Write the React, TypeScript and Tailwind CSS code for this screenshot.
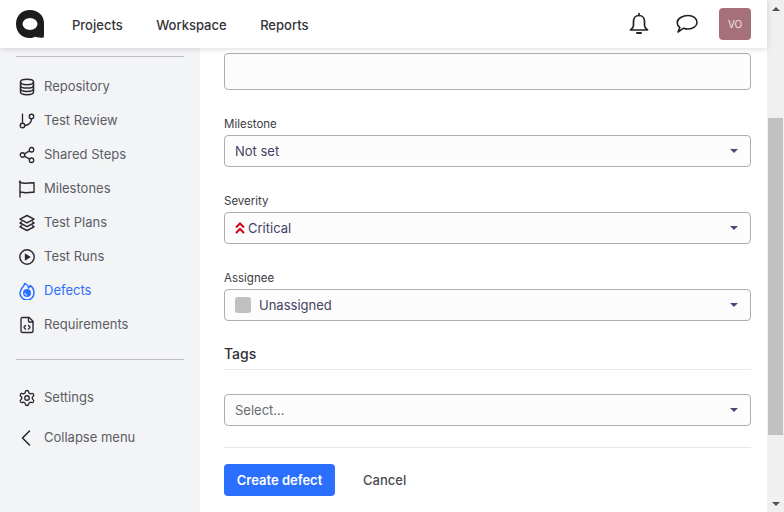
import { FileCode, GitBranch, Settings, Share2 } from 'lucide-react';
import type { ReactNode } from 'react';

const FONT = "font-['Inter','Liberation_Sans',sans-serif]";

function Logo() {
  return (
    <svg width="28" height="28" viewBox="0 0 28 28">
      <path d="M14 0C5.500 0 0 6 0 14s5.500 14 14 14c2 0 3.500-.4 5-1.200 2.500.9 5.500 1 8.500 1 .3-1 .5-2 .5-3.800V13C28 5.500 22 0 14 0z" fill="#1d1d1f" />
      <ellipse cx="14" cy="14" rx="7.500" ry="6" fill="#fff" />
    </svg>
  );
}

function DatabaseIcon() {
  return (
    <svg width="18" height="18" viewBox="0 0 18 18" fill="none" stroke="currentColor" strokeWidth="1.500">
      <ellipse cx="9" cy="4" rx="6.500" ry="2.700" />
      <path d="M2.500 4v10c0 1.600 3 2.700 6.500 2.700s6.500-1.100 6.500-2.700V4" />
      <path d="M2.500 7.400c0 1.600 3 2.700 6.500 2.700s6.500-1.100 6.500-2.700" />
      <path d="M2.500 10.700c0 1.600 3 2.700 6.500 2.700s6.500-1.100 6.500-2.700" />
    </svg>
  );
}

function MilestoneIcon() {
  return (
    <svg width="18" height="18" viewBox="0 0 18 18" fill="none" stroke="currentColor" strokeWidth="1.400" strokeLinecap="round" strokeLinejoin="round">
      <path d="M2 1v16" />
      <path d="M1.500 2c2 1 3 1.300 5 1.300 3 0 5-.6 9.500-.6v9.600c-3-.3-6 .4-8.500.4-2 0-3.500-.4-5.500-.7" />
    </svg>
  );
}

function PlansIcon() {
  return (
    <svg width="18" height="18" viewBox="0 0 18 18" fill="none" stroke="currentColor" strokeWidth="1.500" strokeLinejoin="round">
      <path d="M9 1.500l7 3.700-7 3.700-7-3.700z" />
      <path d="M4 7.500L2 9l7 3.700L16 9l-2-1.500" />
      <path d="M4 11.300L2 12.800l7 3.700 7-3.700-2-1.500" />
    </svg>
  );
}

function RunsIcon() {
  return (
    <svg width="18" height="18" viewBox="0 0 18 18" fill="none">
      <circle cx="9" cy="9" r="7.200" stroke="currentColor" strokeWidth="1.400" />
      <path d="M6.800 5.300l6 3.700-6 3.700z" fill="currentColor" />
    </svg>
  );
}

function DefectIcon() {
  return (
    <svg width="18" height="18" viewBox="0 0 18 18" fill="none">
      <path d="M6.500 1.500c.2 2-1.200 2.500-2.500 4.500C3 7.500 2 9 2 11a7 7 0 0 0 14 0c0-3-1.500-6-4-7.500-.2 1.200-.7 2-1.500 2.500C10.500 4 8.500 2 6.500 1.500z" stroke="#2b6fff" strokeWidth="1.500" strokeLinejoin="round" />
      <circle cx="9" cy="11" r="4" fill="#2b6fff" />
      <path d="M6.800 11a2.200 2.200 0 0 0 2.200 2.200" stroke="#fff" strokeWidth="1" />
    </svg>
  );
}

function BellIcon() {
  return (
    <svg width="22" height="24" viewBox="0 0 22 24" fill="none" stroke="#222" strokeWidth="1.700" strokeLinecap="round" strokeLinejoin="round">
      <path d="M11 1.500v2" />
      <path d="M11 3.500c-3.500 0-5.500 2.700-5.500 6v4c0 1.800-1.300 3.200-3 4.500h17c-1.700-1.300-3-2.700-3-4.500v-4c0-3.300-2-6-5.500-6z" />
      <path d="M9 21h4" strokeWidth="2" />
    </svg>
  );
}

function ChatIcon() {
  return (
    <svg width="22" height="20" viewBox="0 0 22 20" fill="none" stroke="#222" strokeWidth="1.600" strokeLinejoin="round">
      <path d="M12 1.500c5 0 9 2.800 9 6.700s-4 6.800-9 6.800c-1.700 0-3.100-.3-4.400-.8L2 18l1.800-4.500C2 12.200 1.200 10.300 1.200 8.500 1.200 4.500 7 1.500 12 1.500z" />
    </svg>
  );
}

function CollapseIcon() {
  return (
    <svg width="18" height="18" viewBox="0 0 18 18" fill="none" stroke="#2a2a2e" strokeWidth="1.600" strokeLinecap="round" strokeLinejoin="round">
      <path d="M11.500 2L4.500 9l7 7" />
    </svg>
  );
}

function SeverityIcon() {
  return (
    <svg width="10" height="12" viewBox="0 0 10 12" fill="none" stroke="#d0021b" strokeWidth="2">
      <path d="M1 5.500l4-4 4 4" />
      <path d="M1 11l4-4 4 4" />
    </svg>
  );
}

function NavItem({ icon, label, active, className }: { icon: ReactNode; label: string; active?: boolean; className?: string }) {
  return (
    <div className={`flex items-center h-[34px] pl-[18px] ${active ? 'text-[#2b6fff]' : 'text-[#5c5c66]'} ${className ?? ''}`}>
      <span className={`w-[26px] flex-shrink-0 ${active ? 'text-[#2b6fff]' : 'text-[#2a2a2e]'}`}>{icon}</span>
      <span className="text-[13px] leading-none -mt-[2px]">{label}</span>
    </div>
  );
}

function Caret({ className }: { className?: string }) {
  return <span className={`w-0 h-0 border-x-[4px] border-x-transparent border-t-[4px] ${className ?? 'border-t-[#4a4a78]'}`} />;
}

function SelectBox({ children }: { children: ReactNode }) {
  return (
    <div className="h-[32px] flex items-center justify-between pl-[10px] pr-[12px] border border-[#adadad] rounded-[4px] bg-[#fcfcfc] text-[13px] text-[#43435f]">
      <div className="flex items-center pt-[2px]">{children}</div>
      <Caret />
    </div>
  );
}

function Field({ label, children }: { label: string; children: ReactNode }) {
  return (
    <div className="mb-[26px]">
      <div className="text-[11.5px] leading-[16px] mb-[3px] text-[#3c3c44]">{label}</div>
      <SelectBox>{children}</SelectBox>
    </div>
  );
}

export default function App() {
  return (
    <div className={`w-[784px] h-[512px] flex overflow-hidden bg-white ${FONT}`}>
      <div className="w-[767px] flex flex-col">
        <header className="relative z-10 h-[48px] flex-shrink-0 flex items-center bg-white shadow-[0_1px_6px_rgba(0,0,0,0.14)] pl-[16px] pr-[16px]">
          <Logo />
          <nav className="flex items-center gap-[33.5px] ml-[28px] pt-[4px] text-[13px] font-medium text-[#33333a]">
            <span>Projects</span>
            <span>Workspace</span>
            <span>Reports</span>
          </nav>
          <div className="ml-auto flex items-center">
            <BellIcon />
            <span className="w-[26px]" />
            <ChatIcon />
            <span className="w-[21px]" />
            <div className="w-[32px] h-[32px] rounded-[4px] bg-[#a5707a] flex items-center justify-center text-[10px] text-[#f3e6e8]">VO</div>
          </div>
        </header>

        <div className="flex flex-1 min-h-0">
          <aside className="w-[200px] flex-shrink-0 bg-[#f3f4f6] pt-[8px]">
            <div className="mx-[16px] border-t border-[#bdbdc2]" />
            <div className="mt-[13px]">
              <NavItem icon={<DatabaseIcon />} label="Repository" />
              <NavItem icon={<GitBranch className="w-[18px] h-[18px]" strokeWidth={1.800} />} label="Test Review" />
              <NavItem icon={<Share2 className="w-[18px] h-[18px]" strokeWidth={1.700} />} label="Shared Steps" />
              <NavItem icon={<MilestoneIcon />} label="Milestones" />
              <NavItem icon={<PlansIcon />} label="Test Plans" />
              <NavItem icon={<RunsIcon />} label="Test Runs" />
              <NavItem icon={<DefectIcon />} label="Defects" active />
              <NavItem icon={<FileCode className="w-[18px] h-[18px]" strokeWidth={1.800} />} label="Requirements" />
            </div>
            <div className="mx-[16px] mt-[17px] border-t border-[#bdbdc2]" />
            <div className="mt-[21px]">
              <NavItem icon={<Settings className="w-[18px] h-[18px]" strokeWidth={1.800} />} label="Settings" />
              <NavItem className="mt-[6px]" icon={<CollapseIcon />} label="Collapse menu" />
            </div>
          </aside>

          <main className="flex-1 min-w-0 pl-[24px] pr-[16px] pt-[5px]">
            <div className="h-[37px] mb-[26px] border border-[#adadad] rounded-[4px] bg-[#fcfcfc]" />
            <Field label="Milestone">Not set</Field>
            <Field label="Severity">
              <span className="mr-[3px] -mt-[2px]"><SeverityIcon /></span>
              <span>Critical</span>
            </Field>
            <Field label="Assignee">
              <span className="w-[16px] h-[16px] rounded-[3px] bg-[#c0c0c0] mr-[8px] -mt-[2px]" />
              <span>Unassigned</span>
            </Field>
            <h3 className="-mt-[5px] h-[28px] text-[14px] leading-[24px] font-medium text-[#2f2f35] border-b border-[#e8e8e8]">Tags</h3>
            <div className="mt-[24px]">
              <SelectBox><span className="text-[#6a6a72]">Select...</span></SelectBox>
            </div>
            <div className="mt-[21px] border-t border-[#e8e8e8]" />
            <div className="mt-[16px] flex items-center">
              <button className="w-[111px] h-[32px] pt-[2px] rounded-[4px] bg-[#2b6fff] text-white text-[13px] font-semibold">Create defect</button>
              <button className="ml-[28px] h-[32px] pt-[2px] text-[13px] font-medium text-[#4a4a52]">Cancel</button>
            </div>
          </main>
        </div>
      </div>

      <div className="w-[17px] flex-shrink-0 flex flex-col items-center bg-[#f0f0f0]">
        <div className="h-[17px] w-full flex items-center justify-center">
          <span className="w-0 h-0 border-x-[4px] border-x-transparent border-b-[4px] border-b-[#505050]" />
        </div>
        <div className="w-[15px] h-[317px] mt-[101px] bg-[#c1c1c1]" />
        <div className="mt-auto h-[17px] w-full flex items-center justify-center">
          <Caret className="border-t-[#505050]" />
        </div>
      </div>
    </div>
  );
}
